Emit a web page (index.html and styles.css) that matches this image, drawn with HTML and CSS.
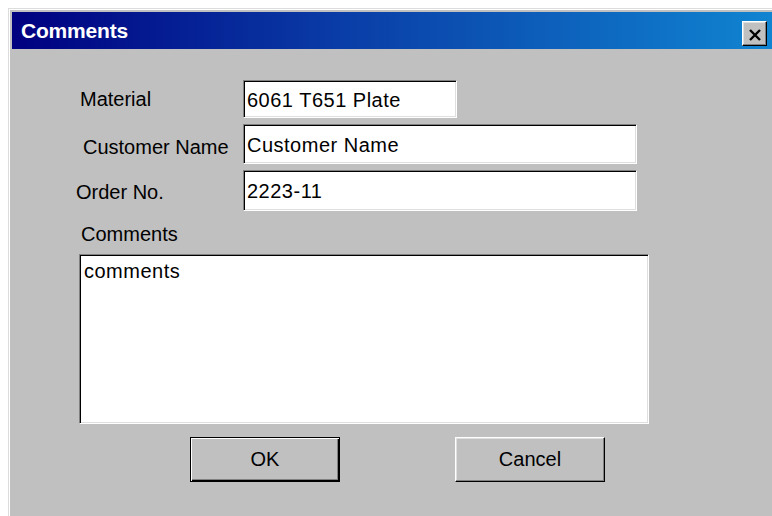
FILE: index.html
```html
<!DOCTYPE html>
<html lang="en">
<head>
<meta charset="utf-8">
<title>Comments</title>
<link rel="stylesheet" href="styles.css">
</head>
<body>
<div class="window">
  <div class="titlebar">
    <span class="title">Comments</span>
    <button class="close" type="button" aria-label="Close">
      <svg width="14" height="12" viewBox="0 0 14 12"><path d="M2 1 L12 11 M12 1 L2 11" stroke="#000" stroke-width="2.4" fill="none"/></svg>
    </button>
  </div>
  <div class="content">
    <div class="form">
      <label class="lbl lbl-material" for="material">Material</label>
      <input id="material" class="field field-short" type="text" value="6061 T651 Plate">
      <label class="lbl lbl-customer" for="customer">Customer Name</label>
      <input id="customer" class="field" type="text" value="Customer Name">
      <label class="lbl lbl-order" for="order">Order No.</label>
      <input id="order" class="field" type="text" value="2223-11">
    </div>
    <label class="lbl lbl-comments" for="comments">Comments</label>
    <textarea id="comments" class="memo">comments</textarea>
    <div class="actions">
      <button class="btn btn-default" type="button">OK</button>
      <button class="btn" type="button">Cancel</button>
    </div>
  </div>
</div>
</body>
</html>
```
FILE: styles.css
```css
html, body {
  margin: 0;
  padding: 0;
  background: #fff;
  height: 100%;
  overflow: hidden;
}

body {
  font-family: "Liberation Sans", Arial, sans-serif;
  font-size: 20px;
  color: #000;
}

/* window frame */
.window {
  margin: 8px 0 0 8px;
  border-top: 1px solid #dcdcdc;
  border-left: 1px solid #dcdcdc;
  box-shadow: inset 1px 1px #fff;
  padding: 3px 0 0 3px;
  background: #c0c0c0;
  height: 520px;
}

.titlebar {
  height: 37px;
  display: flex;
  align-items: center;
  justify-content: space-between;
  background: linear-gradient(to right, #000080 0%, #0a3fa8 45%, #1084d0 100%);
  padding: 0 5px 0 9px;
}

.title {
  color: #fff;
  font-weight: bold;
  font-size: 21px;
  letter-spacing: -0.2px;
  margin-top: 1px;
}

.close {
  width: 25px;
  height: 25px;
  margin-top: 6px;
  padding: 0;
  display: flex;
  align-items: center;
  justify-content: center;
  background: #c0c0c0;
  border: 1px solid;
  border-color: #fff #000 #000 #fff;
  box-shadow: inset -1px -1px #808080, inset 1px 1px #dfdfdf;
}

.close svg {
  display: block;
  margin-top: 2px;
}

.content {
  padding: 31px 0 0 67px;
}

/* label / field rows */
.form {
  display: grid;
  grid-template-columns: 164px auto;
  grid-template-rows: 38px 40px 41px;
  row-gap: 6px;
  align-items: center;
  justify-items: start;
}

.lbl {
  line-height: 24px;
}

.lbl-material { margin-left: 1px; margin-top: -1px; }
.lbl-customer { margin-left: 4px; margin-top: 6px; }
.lbl-order { margin-left: -3px; margin-top: 2px; }

.field,
.memo {
  box-sizing: border-box;
  font: inherit;
  letter-spacing: 0.5px;
  color: #000;
  background: #fff;
  border: 1px solid;
  border-color: #808080 #fff #fff #808080;
  box-shadow: inset 1px 1px #000, inset -1px -1px #dfdfdf;
  outline: none;
  margin: 0;
}

.field {
  width: 394px;
  height: 100%;
  padding: 2px 2px 0 3px;
}

.field-short {
  width: 214px;
}

.lbl-comments {
  display: block;
  margin: 11px 0 0 2px;
}

.memo {
  display: block;
  width: 570px;
  height: 170px;
  margin: 8px 0 0 0;
  padding: 4px 2px 0 4px;
  resize: none;
  overflow: hidden;
  line-height: 24px;
}

.actions {
  display: flex;
  gap: 115px;
  margin: 13px 0 0 111px;
}

.btn {
  box-sizing: border-box;
  width: 150px;
  height: 45px;
  padding: 0;
  font: inherit;
  color: #000;
  background: #c0c0c0;
  border: 1px solid;
  border-color: #fff #000 #000 #fff;
  box-shadow: inset -1px -1px #808080, inset 1px 1px #dfdfdf;
}

.btn-default {
  border: 1px solid #000;
  box-shadow: inset 1px 1px #fff, inset -1px -1px #000, inset -2px -2px #808080;
}
```
